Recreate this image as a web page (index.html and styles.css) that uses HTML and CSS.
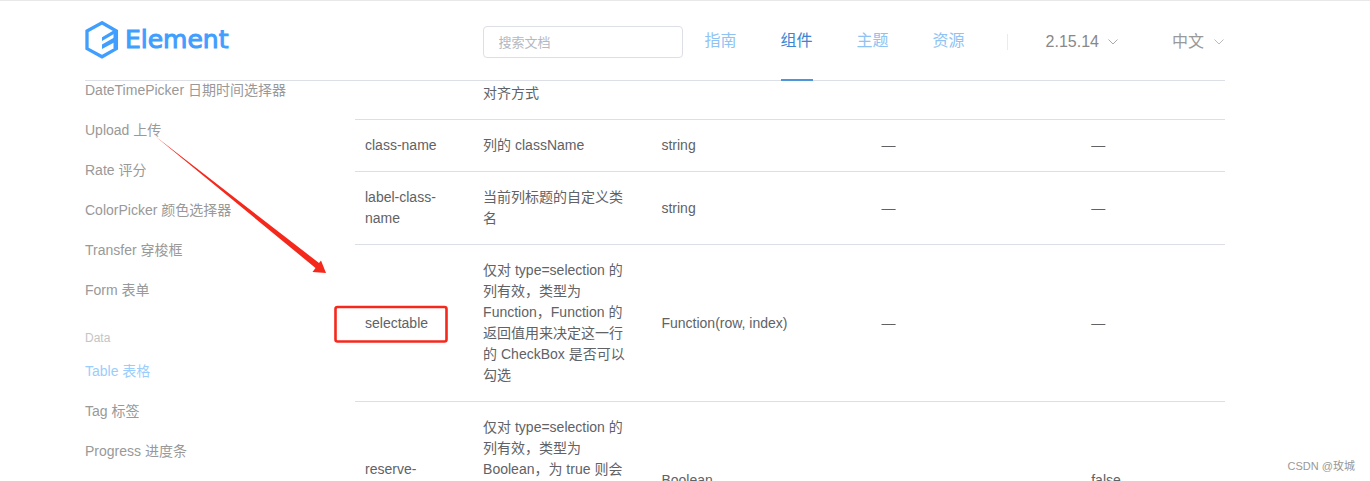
FILE: index.html
```html
<!DOCTYPE html>
<html lang="zh-CN">
<head>
<meta charset="utf-8">
<title>Element</title>
<link rel="stylesheet" href="styles.css">
</head>
<body>
<header class="header">
  <div class="header-inner">
    <a class="logo" href="#">
      <svg class="logo-mark" viewBox="0 0 34 38" width="34" height="38" aria-hidden="true">
        <path d="M17 1.8 31.4 10V27.6L17 35.8 2 27.6V10Z" fill="none" stroke="#409eff" stroke-width="3.3"/>
        <path d="M17 16.2 31 8V11.8L17 20ZM17 23.6 31 15.4V20.4L17 28Z" fill="#409eff"/>
        <path d="M28.500 10H33V27H28.500Z" fill="#409eff"/>
      </svg>
      <span class="logo-text">Element</span>
    </a>
    <nav class="nav">
      <input class="search" type="text" placeholder="搜索文档" aria-label="搜索文档">
      <a class="nav-link" href="#">指南</a>
      <a class="nav-link active" href="#">组件</a>
      <a class="nav-link" href="#">主题</a>
      <a class="nav-link" href="#">资源</a>
      <span class="divider"></span>
      <button class="picker" type="button">2.15.14
        <svg viewBox="0 0 10 6" width="10" height="6" aria-hidden="true"><path d="M.5.5 5 5 9.5.5" fill="none" stroke="#aaa"/></svg>
      </button>
      <button class="picker language" type="button">中文
        <svg viewBox="0 0 10 6" width="10" height="6" aria-hidden="true"><path d="M.5.5 5 5 9.5.5" fill="none" stroke="#bbb"/></svg>
      </button>
    </nav>
  </div>
</header>
<main class="main">
  <aside class="sidebar">
    <a href="#">DateTimePicker 日期时间选择器</a>
    <a href="#">Upload 上传</a>
    <a href="#">Rate 评分</a>
    <a href="#">ColorPicker 颜色选择器</a>
    <a href="#">Transfer 穿梭框</a>
    <a href="#">Form 表单</a>
    <div class="group-title">Data</div>
    <a class="current" href="#">Table 表格</a>
    <a href="#">Tag 标签</a>
    <a href="#">Progress 进度条</a>
  </aside>
  <table class="attributes">
    <colgroup><col class="col-name"><col class="col-desc"><col class="col-type"><col class="col-values"><col></colgroup>
    <tbody>
      <tr><td></td><td>对齐方式</td><td></td><td></td><td></td></tr>
      <tr><td>class-name</td><td>列的 className</td><td>string</td><td>—</td><td>—</td></tr>
      <tr><td>label-class-name</td><td>当前列标题的自定义类名</td><td>string</td><td>—</td><td>—</td></tr>
      <tr><td>selectable</td><td>仅对 type=selection 的列有效，类型为 Function，Function 的返回值用来决定这一行的 CheckBox 是否可以勾选</td><td>Function(row, index)</td><td>—</td><td>—</td></tr>
      <tr><td>reserve-selection</td><td>仅对 type=selection 的列有效，类型为 Boolean，为 true 则会在数据更新之后保留之前选中的数据（需指定 row-key）</td><td>Boolean</td><td></td><td>false</td></tr>
    </tbody>
  </table>
</main>
<svg class="annotation" viewBox="0 0 460 360" width="460" height="360" aria-hidden="true">
  <path d="M155 136 319 263 321 260.500 326 273 312.500 272 315.500 268Z" fill="#f5281c"/>
  <rect x="335.500" y="307" width="111" height="34.500" rx="2" fill="none" stroke="#f5281c" stroke-width="2.600"/>
</svg>
<div class="watermark">CSDN @玫城</div>
</body>
</html>
```
FILE: styles.css
```css
* {
  box-sizing: border-box;
}

body {
  margin: 0;
  height: 100vh;
  overflow: hidden;
  position: relative;
  background: #fff;
  color: #606266;
  font: 14px/21px "Liberation Sans", "Noto Sans CJK SC", sans-serif;
}

a {
  color: inherit;
  text-decoration: none;
}

.header {
  position: relative;
  z-index: 1;
  padding: 0 145px 0 85px;
  border-top: 1px solid #e8e8e8;
  background: #fff;
}

.header-inner {
  display: flex;
  align-items: flex-start;
  justify-content: space-between;
  height: 80px;
  border-bottom: 1px solid #dcdfe6;
}

.logo {
  display: flex;
  align-items: center;
  gap: 6px;
  padding-top: 20px;
  color: #409eff;
}

.logo-text {
  font: 25px/30px "DejaVu Sans", sans-serif;
  -webkit-text-stroke: 1px #409eff;
}

.nav {
  display: flex;
  align-items: center;
  height: 80px;
  padding-top: 2px;
}

.search {
  width: 200px;
  height: 32px;
  padding: 0 15px;
  border: 1px solid #dcdfe6;
  border-radius: 4px;
  font: 13px "Liberation Sans", "Noto Sans CJK SC", sans-serif;
}

.search::placeholder {
  color: #b4b8bf;
}

.nav-link {
  height: 78px;
  margin: 0 22px;
  color: #8fc3f3;
  font-size: 16px;
  line-height: 76px;
}

.active {
  border-bottom: 2px solid #4f96d9;
  color: #3a86d4;
}

.divider {
  width: 1px;
  height: 16px;
  margin: 0 38px 0 20px;
  background: #ebebeb;
}

.picker {
  display: flex;
  align-items: center;
  gap: 9px;
  padding: 0;
  border: 0;
  background: none;
  color: #888;
  font: 16px/24px "Liberation Sans", "Noto Sans CJK SC", sans-serif;
}

.language {
  gap: 10px;
  margin-left: 54px;
  margin-right: 1px;
  color: #999;
}

.main {
  display: flex;
  margin-top: -13px;
  padding: 0 145px 0 85px;
}

.sidebar {
  display: flex;
  flex: none;
  flex-direction: column;
  width: 270px;
  padding-top: 2px;
  color: #999;
  line-height: 40px;
}

.group-title {
  margin-top: 15px;
  color: #c4c4c4;
  font-size: 12px;
  line-height: 26px;
}

.current {
  color: #9bcdfc;
}

.attributes {
  flex: 1;
  align-self: flex-start;
  table-layout: fixed;
  border-collapse: separate;
  border-spacing: 0;
}

.col-name {
  width: 13%;
}

.col-desc {
  width: 20.5%;
}

.col-type {
  width: 25.3%;
}

.col-values {
  width: 24.1%;
}

.attributes td {
  height: 52px;
  padding: 15px;
  border-bottom: 1px solid #dcdfe6;
}

.attributes td:first-child {
  padding-left: 10px;
}

.annotation {
  position: absolute;
  top: 0;
  left: 0;
  z-index: 2;
  pointer-events: none;
}

.watermark {
  position: absolute;
  right: 15px;
  bottom: 5px;
  color: #999;
  font-size: 11px;
  line-height: 20px;
}
```
